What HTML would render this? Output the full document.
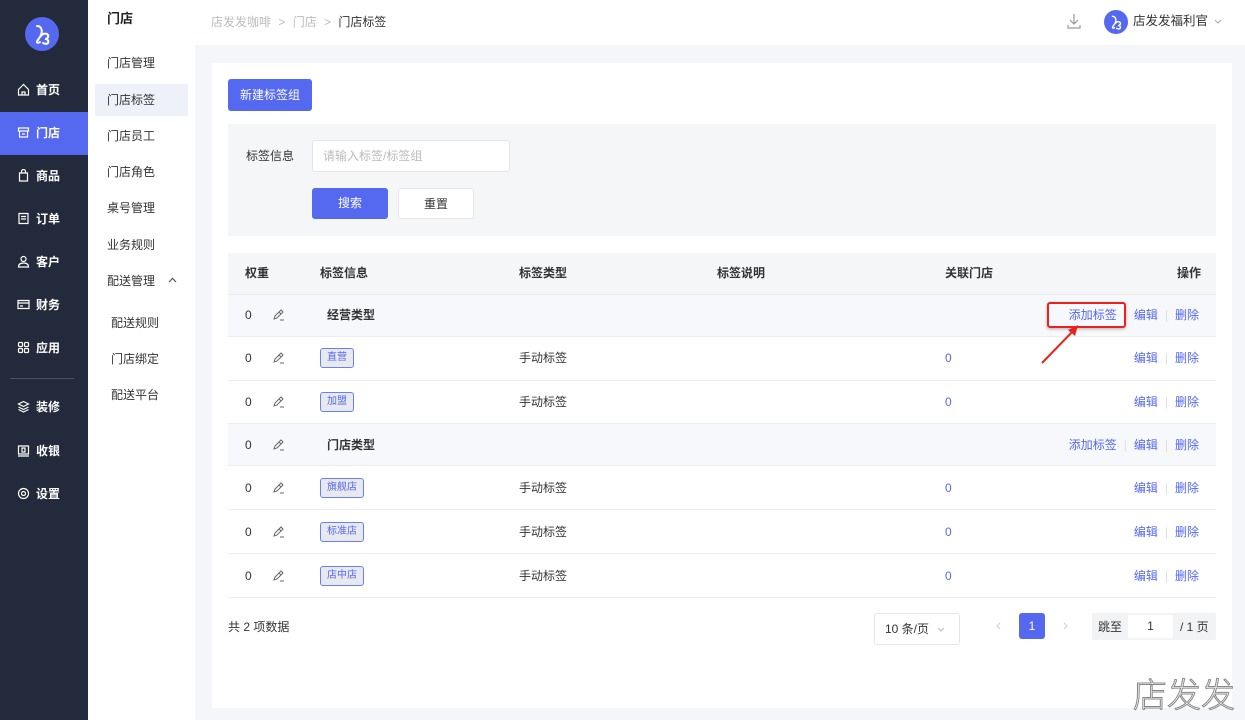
<!DOCTYPE html>
<html><head><meta charset="utf-8">
<style>
*{margin:0;padding:0;box-sizing:border-box}
body{width:1245px;height:720px;overflow:hidden;position:relative;background:#f5f6fa;font-family:"Liberation Sans","Noto Sans CJK SC",sans-serif;font-size:12px;color:#333}
.a{position:absolute;white-space:nowrap;line-height:16px}
#sb{position:absolute;left:0;top:0;width:88px;height:720px;background:#232a3b}
.nav{position:absolute;left:0;width:88px;height:43px;color:#fff;font-size:12px;font-weight:bold;line-height:43px;padding-left:17px}
.nav svg{vertical-align:-2px;margin-right:6px}
#sb2{position:absolute;left:88px;top:0;width:107px;height:720px;background:#fff}
.s2{position:absolute;left:107px;font-size:12px;color:#333}
#hd{position:absolute;left:195px;top:0;width:1050px;height:45px;background:#fff}
#card{position:absolute;left:212px;top:63px;width:1020px;height:645px;background:#fff}
.btn{position:absolute;border-radius:3px;text-align:center;font-size:12px}
.row{position:absolute;left:228px;width:988px;border-bottom:1px solid #ebedf0}
.tag{display:inline-block;border:1px solid #6b7ff5;background:#e8e9ee;color:#5468f0;border-radius:3px;font-size:10px;padding:0 6px;line-height:18px}
.lk{color:#5468f0}
.sep{color:#ddd;margin:0 7px}
</style></head><body>
<div id="sb">
  <svg class="a" style="left:25px;top:17px" width="34" height="34" viewBox="0 0 34 34"><circle cx="17" cy="17" r="17" fill="#5468f0"/><path d="M12 9c4 0 6 4 4 9-1 3-4 5-4 7 0 1 2 1 3 0M16 19c2-3 6-3 7-1 1 2-1 4-3 4 3 0 4 2 3 4-1 1-3 1-5 0" stroke="#fff" stroke-width="2" fill="none" stroke-linecap="round"/></svg>
  <div class="nav" style="top:69px"><svg width="13" height="13" viewBox="0 0 13 13" fill="none" stroke="#fff" stroke-width="1.2"><path d="M1.5 6.5L6.5 1.5 11.5 6.5V12H1.5z M5 12V9h3v3"/></svg>首页</div>
  <div class="nav" style="top:112px;background:#5468f0"><svg width="13" height="13" viewBox="0 0 13 13" fill="none" stroke="#fff" stroke-width="1.2"><path d="M1.5 2h10v3h-10z M2.5 5v6h8V5 M5 8h3"/></svg>门店</div>
  <div class="nav" style="top:155px"><svg width="13" height="13" viewBox="0 0 13 13" fill="none" stroke="#fff" stroke-width="1.2"><path d="M2.5 4h8v8h-8z M4.5 4V2.5a2 2 0 014 0V4"/></svg>商品</div>
  <div class="nav" style="top:198px"><svg width="13" height="13" viewBox="0 0 13 13" fill="none" stroke="#fff" stroke-width="1.2"><path d="M2 1.5h9v10H2z M4 4.5h5 M4 7h5"/></svg>订单</div>
  <div class="nav" style="top:241px"><svg width="13" height="13" viewBox="0 0 13 13" fill="none" stroke="#fff" stroke-width="1.2"><circle cx="6.5" cy="4" r="2.5"/><path d="M1.5 12c0-3 2-4 5-4s5 1 5 4z"/></svg>客户</div>
  <div class="nav" style="top:284px"><svg width="13" height="13" viewBox="0 0 13 13" fill="none" stroke="#fff" stroke-width="1.2"><path d="M1 2.5h11v8H1z M1 5h11 M3 8h3"/></svg>财务</div>
  <div class="nav" style="top:327px"><svg width="13" height="13" viewBox="0 0 13 13" fill="none" stroke="#fff" stroke-width="1.2"><rect x="1.5" y="1.5" width="4" height="4" rx="1"/><rect x="7.5" y="1.5" width="4" height="4" rx="1"/><rect x="1.5" y="7.5" width="4" height="4" rx="1"/><rect x="7.5" y="7.5" width="4" height="4" rx="1"/></svg>应用</div>
  <div class="a" style="left:10px;top:378px;width:64px;height:1px;background:#4a5163"></div>
  <div class="nav" style="top:386px"><svg width="13" height="13" viewBox="0 0 13 13" fill="none" stroke="#fff" stroke-width="1.2"><path d="M6.5 1.5l5 2.5-5 2.5-5-2.5z M1.5 7l5 2.5 5-2.5 M1.5 9.5l5 2.5 5-2.5"/></svg>装修</div>
  <div class="nav" style="top:430px"><svg width="13" height="13" viewBox="0 0 13 13" fill="none" stroke="#fff" stroke-width="1.2"><path d="M1.5 2h10v8h-10z M1 12h11 M5 4h3v4H5z"/></svg>收银</div>
  <div class="nav" style="top:473px"><svg width="13" height="13" viewBox="0 0 13 13" fill="none" stroke="#fff" stroke-width="1.2"><circle cx="6.5" cy="6.5" r="5"/><circle cx="6.5" cy="6.5" r="2"/></svg>设置</div>
</div>
<div id="sb2">
  <div class="a" style="left:19px;top:11px;font-size:13px;font-weight:bold;color:#222">门店</div>
  <div class="a" style="left:7px;top:84px;width:93px;height:32px;background:#eef0fa;border-radius:2px"></div>
</div>
<div class="s2 a" style="top:55px">门店管理</div>
<div class="s2 a" style="top:92px">门店标签</div>
<div class="s2 a" style="top:128px">门店员工</div>
<div class="s2 a" style="top:164px">门店角色</div>
<div class="s2 a" style="top:200px">桌号管理</div>
<div class="s2 a" style="top:237px">业务规则</div>
<div class="s2 a" style="top:273px">配送管理</div>
<svg class="a" style="left:168px;top:277px" width="9" height="6" viewBox="0 0 9 6" fill="none" stroke="#555" stroke-width="1.2"><path d="M1 5l3.5-3.5L8 5"/></svg>
<div class="s2 a" style="left:111px;top:315px">配送规则</div>
<div class="s2 a" style="left:111px;top:351px">门店绑定</div>
<div class="s2 a" style="left:111px;top:387px">配送平台</div>

<div id="hd">
  <div class="a" style="left:16px;top:14px;color:#bbb">店发发咖啡 <span style="margin:0 4px">&gt;</span> 门店 <span style="margin:0 4px">&gt;</span> <span style="color:#333">门店标签</span></div>
  <svg class="a" style="left:872px;top:13px" width="14" height="16" viewBox="0 0 14 16" fill="none" stroke="#999" stroke-width="1.2"><path d="M7 1v10 M3 7l4 4 4-4 M1 12v3h12v-3"/></svg>
  <svg class="a" style="left:909px;top:10px" width="24" height="24" viewBox="0 0 34 34"><circle cx="17" cy="17" r="17" fill="#5468f0"/><path d="M12 9c4 0 6 4 4 9-1 3-4 5-4 7 0 1 2 1 3 0M16 19c2-3 6-3 7-1 1 2-1 4-3 4 3 0 4 2 3 4-1 1-3 1-5 0" stroke="#fff" stroke-width="2" fill="none" stroke-linecap="round"/></svg>
  <div class="a" style="left:938px;top:13px;color:#333;font-size:12.5px">店发发福利官</div>
  <svg class="a" style="left:1019px;top:19px" width="8" height="5" viewBox="0 0 8 5" fill="none" stroke="#aaa" stroke-width="1"><path d="M1 1l3 3 3-3"/></svg>
</div>

<div id="card"></div>
<div class="btn" style="left:228px;top:79px;width:84px;height:32px;line-height:32px;background:#5468f0;color:#fff">新建标签组</div>
<div class="a" style="left:228px;top:124px;width:988px;height:112px;background:#f5f6f8"></div>
<div class="a" style="left:246px;top:148px">标签信息</div>
<div class="a" style="left:312px;top:140px;width:198px;height:32px;background:#fff;border:1px solid #e5e6eb;border-radius:3px;padding-left:10px;line-height:30px;color:#bbb">请输入标签/标签组</div>
<div class="btn" style="left:312px;top:188px;width:76px;height:31px;line-height:31px;background:#5468f0;color:#fff">搜索</div>
<div class="btn" style="left:398px;top:188px;width:76px;height:31px;line-height:31px;background:#fff;border:1px solid #e5e6eb">重置</div>

<div class="row" style="top:253px;height:42px;background:#f5f6f8"></div>
<div class="row" style="top:295px;height:42px;background:#f7f8fb"></div>
<div class="row" style="top:337px;height:44px"></div>
<div class="row" style="top:381px;height:43px"></div>
<div class="row" style="top:424px;height:42px;background:#f7f8fb"></div>
<div class="row" style="top:466px;height:44px"></div>
<div class="row" style="top:510px;height:44px"></div>
<div class="row" style="top:554px;height:44px"></div>

<div class="a" style="left:245px;top:265px;font-weight:bold">权重</div>
<div class="a" style="left:320px;top:265px;font-weight:bold">标签信息</div>
<div class="a" style="left:519px;top:265px;font-weight:bold">标签类型</div>
<div class="a" style="left:717px;top:265px;font-weight:bold">标签说明</div>
<div class="a" style="left:945px;top:265px;font-weight:bold">关联门店</div>
<div class="a" style="left:1177px;top:265px;font-weight:bold">操作</div>

<div id="rows"></div>
<script>
var rows=[[315,1,'经营类型'],[358,0,'直营'],[402,0,'加盟'],[445,1,'门店类型'],[488,0,'旗舰店'],[532,0,'标准店'],[576,0,'店中店']];
var h='';
rows.forEach(function(r){var y=r[0];
h+='<div class="a" style="left:245px;top:'+(y-8)+'px">0</div>';
h+='<svg class="a" style="left:272px;top:'+(y-7)+'px" width="13" height="13" viewBox="0 0 13 13" fill="none" stroke="#666" stroke-width="1"><path d="M2 11l1-3 6-6 2 2-6 6z M7 4l2 2 M8 12h4"/></svg>';
if(r[1]){h+='<div class="a" style="left:327px;top:'+(y-8)+'px;font-weight:bold">'+r[2]+'</div>';
h+='<div class="a lk" style="right:46px;top:'+(y-8)+'px">添加标签<span class="sep">|</span>编辑<span class="sep">|</span>删除</div>';}
else{h+='<div class="a" style="left:320px;top:'+(y-12)+'px;line-height:20px"><span class="tag">'+r[2]+'</span></div>';
h+='<div class="a" style="left:519px;top:'+(y-8)+'px">手动标签</div>';
h+='<div class="a lk" style="left:945px;top:'+(y-8)+'px">0</div>';
h+='<div class="a lk" style="right:46px;top:'+(y-8)+'px">编辑<span class="sep">|</span>删除</div>';}
});
document.getElementById('rows').innerHTML=h;
</script>
<div class="a" style="left:1047px;top:302px;width:79px;height:26px;border:2px solid #e8231f;border-radius:3px;box-shadow:0 1px 3px rgba(0,0,0,.3)"></div>
<svg class="a" style="left:1038px;top:322px" width="45" height="45" viewBox="0 0 45 45"><path d="M4 41L38 6" stroke="#e8231f" stroke-width="2"/><path d="M40 3l-3 11-7-6z" fill="#e8231f"/></svg>

<div class="a" style="left:228px;top:619px">共 2 项数据</div>
<div class="a" style="left:874px;top:613px;width:86px;height:32px;border:1px solid #e5e6eb;border-radius:3px;padding-left:10px;line-height:30px">10 条/页</div>
<svg class="a" style="left:937px;top:627px" width="8" height="5" viewBox="0 0 8 5" fill="none" stroke="#bbb" stroke-width="1"><path d="M1 1l3 3 3-3"/></svg>
<svg class="a" style="left:996px;top:622px" width="5" height="8" viewBox="0 0 5 8" fill="none" stroke="#ccc" stroke-width="1"><path d="M4 1L1 4l3 3"/></svg>
<div class="btn" style="left:1019px;top:613px;width:26px;height:26px;line-height:26px;background:#5468f0;color:#fff">1</div>
<svg class="a" style="left:1063px;top:622px" width="5" height="8" viewBox="0 0 5 8" fill="none" stroke="#ccc" stroke-width="1"><path d="M1 1l3 3-3 3"/></svg>
<div class="a" style="left:1092px;top:613px;width:124px;height:27px;background:#f2f3f5;border-radius:2px"></div>
<div class="a" style="left:1098px;top:619px">跳至</div>
<div class="a" style="left:1128px;top:615px;width:45px;height:23px;background:#fff;text-align:center;line-height:23px">1</div>
<div class="a" style="left:1180px;top:619px">/ 1 页</div>
<div class="a" style="left:1133px;top:673px;font-size:34px;line-height:40px;color:#fff;-webkit-text-stroke:1px #888;font-family:'Noto Sans CJK SC',sans-serif;font-weight:300">店发发</div>
</body></html>
